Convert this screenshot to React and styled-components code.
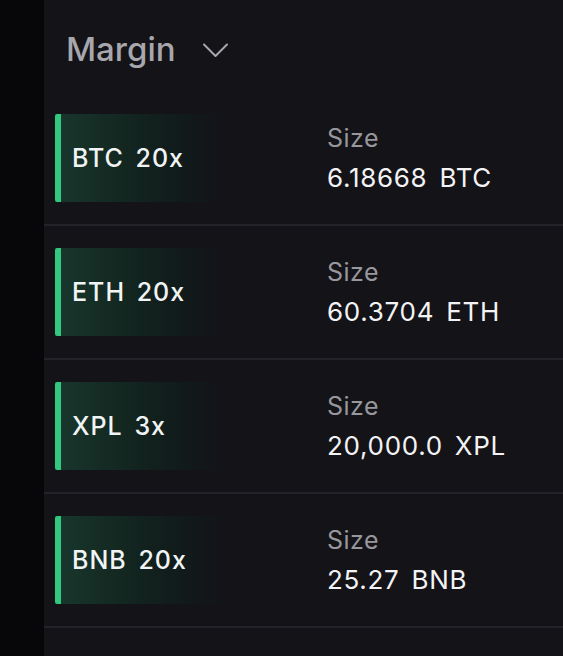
import React from "react";
import styled, { createGlobalStyle } from "styled-components";

const Global = createGlobalStyle`
  html, body { margin: 0; padding: 0; background: #131318; }
  body { font-family: Inter, "Noto Sans", sans-serif; -webkit-font-smoothing: antialiased; }
`;

const Page = styled.div`
  display: flex;
  width: 563px;
  height: 656px;
  overflow: hidden;
`;

const Rail = styled.div`
  width: 44px;
  flex: none;
  background: #07070a;
`;

const Panel = styled.div`
  flex: 1;
  background: #131318;
  display: flex;
  flex-direction: column;
`;

const Header = styled.div`
  height: 92px;
  box-sizing: border-box;
  padding: 28px 0 0 22px;
  display: flex;
  align-items: flex-start;
  gap: 27px;
`;

const Title = styled.span`
  font-size: 33px;
  line-height: 42px;
  font-weight: 500;
  color: #a7a7ad;
`;

const Chevron = styled.svg`
  margin-top: 15px;
  width: 25px;
  height: 15px;
`;

const Row = styled.div`
  display: grid;
  grid-template-columns: 272px 1fr;
  align-items: center;
  padding: 22px 0 22px 11px;
  border-bottom: 2px solid #232329;
`;

const Tag = styled.div`
  height: 88px;
  width: 170px;
  box-sizing: border-box;
  border-left: 6px solid #30c97f;
  border-radius: 2px;
  padding-left: 11px;
  display: flex;
  align-items: center;
  background: linear-gradient(90deg, #18362c 0%, #132821 35%, #111d1c 65%, rgba(19, 19, 24, 0) 100%);
  font-size: 25px;
  font-weight: 500;
  color: #f1f4f4;
  letter-spacing: 1px;
  word-spacing: 4px;
`;

const Info = styled.div`
  display: flex;
  flex-direction: column;
`;

const Label = styled.span`
  font-size: 25px;
  line-height: 40px;
  color: #97979d;
  letter-spacing: 0.5px;
`;

const Value = styled.span`
  font-size: 26px;
  line-height: 40px;
  color: #f3f3f5;
  letter-spacing: 0.7px;
  word-spacing: 4px;
`;

const positions = [
  { pair: "BTC", lev: "20x", size: "6.18668 BTC" },
  { pair: "ETH", lev: "20x", size: "60.3704 ETH" },
  { pair: "XPL", lev: "3x", size: "20,000.0 XPL" },
  { pair: "BNB", lev: "20x", size: "25.27 BNB" },
];

export default function App() {
  return (
    <>
      <Global />
      <Page>
        <Rail />
        <Panel>
          <Header>
            <Title>Margin</Title>
            <Chevron viewBox="0 0 25 15" fill="none">
              <path d="M1 1.5 L12.5 13 L24 1.5" stroke="#a7a7ad" strokeWidth="2" strokeLinecap="round" strokeLinejoin="round" />
            </Chevron>
          </Header>
          {positions.map((p) => (
            <Row key={p.pair}>
              <Tag>{p.pair} {p.lev}</Tag>
              <Info>
                <Label>Size</Label>
                <Value>{p.size}</Value>
              </Info>
            </Row>
          ))}
        </Panel>
      </Page>
    </>
  );
}
